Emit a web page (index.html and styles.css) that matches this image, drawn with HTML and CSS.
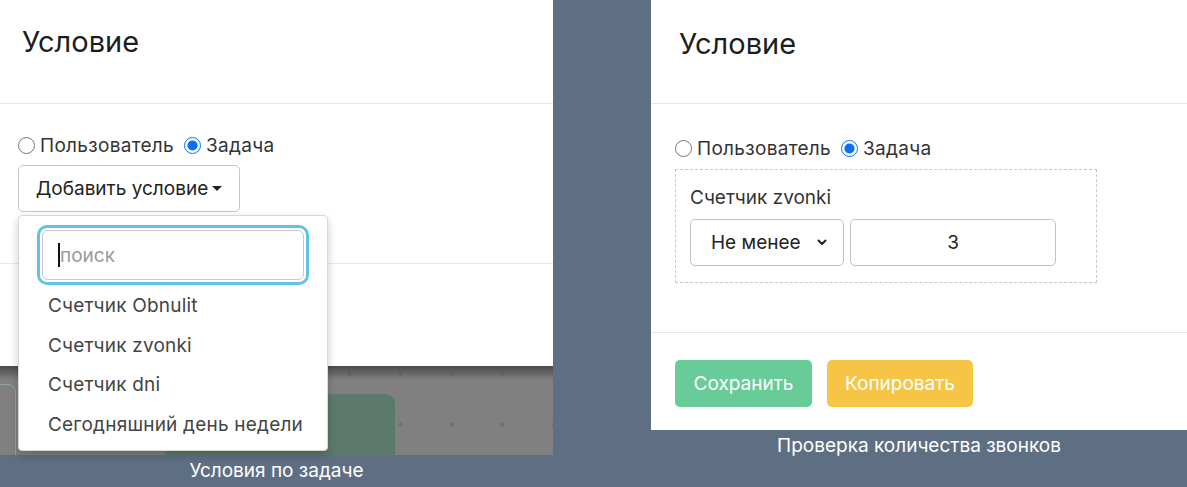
FILE: index.html
```html
<!DOCTYPE html>
<html lang="ru">
<head>
  <meta charset="UTF-8" />
  <title>Условие</title>
  <link rel="stylesheet" href="styles.css">
</head>
<body>

<div class="shots">

  <!-- Левый скриншот: выпадающий список условий -->
  <div class="shot shot-left">
    <div class="frame">
      <div class="modal">
        <div class="modal-header">
          <h2>Условие</h2>
        </div>
        <div class="modal-body">
          <div class="radios">
            <label><input type="radio" name="t1" /> Пользователь</label>
            <label><input type="radio" name="t1" checked /> Задача</label>
          </div>
          <div class="dropdown">
            <button class="btn-add">Добавить условие <span class="caret"></span></button>
            <div class="menu">
              <div class="search-ring">
                <div class="search"><span class="cursor"></span>поиск</div>
              </div>
              <div class="menu-list">
                <div class="menu-item">Счетчик Obnulit</div>
                <div class="menu-item">Счетчик zvonki</div>
                <div class="menu-item">Счетчик dni</div>
                <div class="menu-item">Сегодняшний день недели</div>
              </div>
            </div>
          </div>
        </div>
        <div class="modal-footer">
          <span class="btn-hidden"></span>
        </div>
      </div>
      <div class="backdrop">
        <div class="ghost-card"></div>
        <div class="ghost-green"></div>
      </div>
    </div>
    <div class="caption">Условия по задаче</div>
  </div>

  <!-- Правый скриншот: условие со счетчиком -->
  <div class="shot shot-right">
    <div class="modal">
      <div class="modal-header">
        <h2>Условие</h2>
      </div>
      <div class="modal-body">
        <div class="radios">
          <label><input type="radio" name="t2" /> Пользователь</label>
          <label><input type="radio" name="t2" checked /> Задача</label>
        </div>
        <div class="cond-box">
          <div class="cond-title">Счетчик zvonki</div>
          <div class="cond-row">
            <div class="select">
              <span>Не менее</span>
              <svg width="10" height="7" viewBox="0 0 10 7"><path d="M1.5 1.5 L5 5 L8.5 1.5" fill="none" stroke="#222" stroke-width="2" stroke-linecap="round" stroke-linejoin="round"/></svg>
            </div>
            <div class="num-input">3</div>
          </div>
        </div>
      </div>
      <div class="modal-footer">
        <button class="btn btn-save">Сохранить</button>
        <button class="btn btn-copy">Копировать</button>
      </div>
    </div>
    <div class="caption">Проверка количества звонков</div>
  </div>

</div>

</body>
</html>
```

FILE: styles.css
```css
* {
  box-sizing: border-box;
  margin: 0;
  padding: 0;
}

body {
  font-family: Inter, "Noto Sans", sans-serif;
  background: #5e6f84;
  width: 1187px;
  height: 487px;
  overflow: hidden;
  color: #222;
}

.shots {
  display: flex;
  justify-content: space-between;
}

.shot-left {
  width: 553px;
}

.shot-right {
  width: 536px;
}

.modal {
  background: #fff;
}

.modal-header {
  height: 104px;
  border-bottom: 1px solid #e6e8ea;
  padding: 24px 0 0 22px;
}

.modal-header h2 {
  font-weight: 400;
  font-size: 29px;
  color: #1d1d1d;
}

.shot-right .modal-header {
  padding: 26px 0 0 28px;
}

.radios {
  display: flex;
  gap: 10px;
  font-size: 19px;
  color: #333;
  letter-spacing: 0.3px;
}

.radios label {
  display: flex;
  align-items: center;
  gap: 5px;
}

.radios input {
  width: 17px;
  height: 17px;
  margin: 0;
  accent-color: #0b6ef7;
}

/* левая часть */
.shot-left .modal {
  height: 366px;
}

.shot-left .modal-body {
  padding: 30px 0 0 18px;
  height: 160px;
  border-bottom: 1px solid #e6e8ea;
}

.dropdown {
  position: relative;
  margin-top: 8px;
}

.btn-add {
  font-family: inherit;
  font-size: 19px;
  color: #222;
  background: #fff;
  border: 1px solid #c4c6cc;
  border-radius: 5px;
  height: 47px;
  width: 222px;
  display: flex;
  align-items: center;
  justify-content: center;
  gap: 4px;
}

.caret {
  display: inline-block;
  border-left: 5px solid transparent;
  border-right: 5px solid transparent;
  border-top: 5px solid #222;
}

.menu {
  position: absolute;
  top: 50px;
  left: 0;
  width: 310px;
  height: 236px;
  background: #fff;
  border: 1px solid #d8d8d8;
  border-radius: 4px;
  box-shadow: 0 4px 10px rgba(0, 0, 0, 0.2);
  padding: 9px 18px 0 18px;
  z-index: 2;
}

.search-ring {
  border: 3px solid #62c3e6;
  border-radius: 10px;
  padding: 2px;
  width: 272px;
}

.search {
  height: 50px;
  border: 1px solid #c8c8d0;
  border-radius: 6px;
  display: flex;
  align-items: center;
  padding-left: 15px;
  font-size: 19px;
  color: #9a9a9a;
}

.cursor {
  width: 2px;
  height: 24px;
  background: #111;
}

.menu-list {
  margin-top: 1px;
}

.menu-item {
  font-size: 19px;
  color: #444;
  height: 39.7px;
  line-height: 39px;
  padding-left: 11px;
  letter-spacing: 0.2px;
}

.shot-left .modal-footer {
  padding: 30px 0 0 18px;
}

.btn-hidden {
  display: block;
  width: 120px;
  height: 38px;
  background: #68cc99;
  border-radius: 4px;
}

.backdrop {
  height: 89px;
  background:
    linear-gradient(#4a4a4a, rgba(128, 128, 128, 0) 14px),
    radial-gradient(circle, #707070 1.8px, transparent 2.3px) 18px 33px / 51px 51px,
    #808080;
  position: relative;
  overflow: hidden;
}

.ghost-card {
  position: absolute;
  left: -10px;
  top: 18px;
  width: 26px;
  height: 90px;
  border: 1px solid #93a0a0;
  border-radius: 8px;
}

.ghost-green {
  position: absolute;
  left: 165px;
  top: 28px;
  width: 230px;
  height: 80px;
  background: #5c7a6c;
  border-radius: 9px;
}

.caption {
  text-align: center;
  color: #fff;
  font-size: 19px;
}

.shot-left .caption {
  margin-top: 4px;
}

.shot-right .caption {
  margin-top: 4px;
}

/* правая часть */
.shot-right .modal {
  height: 430px;
}

.shot-right .modal-body {
  padding: 33px 0 0 24px;
  height: 229px;
  border-bottom: 1px solid #e6e8ea;
}

.cond-box {
  margin-top: 9px;
  width: 422px;
  height: 114px;
  border: 1px dashed #c9c9c9;
  padding: 16px 14px 0 14px;
}

.cond-title {
  font-size: 19px;
  color: #333;
}

.cond-row {
  display: flex;
  gap: 6px;
  margin-top: 10px;
}

.select {
  width: 154px;
  height: 47px;
  border: 1px solid #bfc2cc;
  border-radius: 5px;
  display: flex;
  align-items: center;
  justify-content: space-between;
  padding: 0 16px 0 20px;
  font-size: 19px;
  color: #222;
}

.num-input {
  width: 206px;
  height: 47px;
  border: 1px solid #bfc2cc;
  border-radius: 5px;
  display: flex;
  align-items: center;
  justify-content: center;
  font-size: 19px;
  color: #222;
}

.shot-right .modal-footer {
  padding: 27px 0 0 24px;
  display: flex;
  gap: 15px;
}

.btn {
  font-family: inherit;
  font-size: 19px;
  color: #fff;
  border: none;
  border-radius: 5px;
  height: 47px;
}

.btn-save {
  width: 137px;
  background: #68cc99;
}

.btn-copy {
  width: 146px;
  background: #f6c546;
}
```
